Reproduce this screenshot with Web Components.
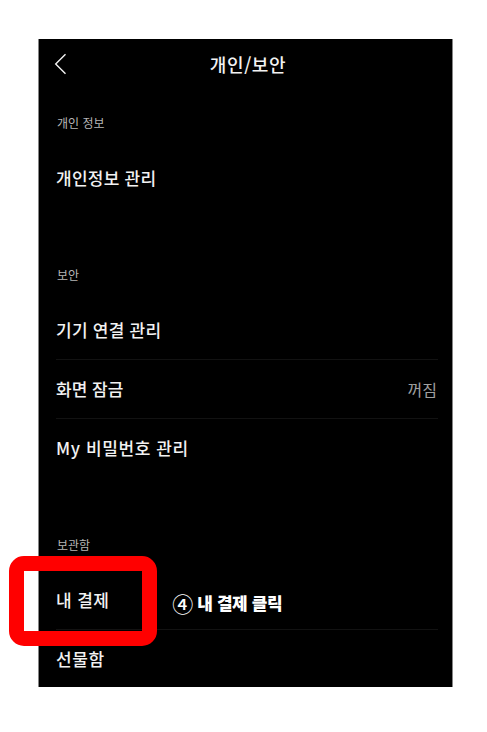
<!DOCTYPE html>
<html lang="ko">
<head>
<meta charset="UTF-8">
<title>개인/보안</title>
<style>
  body {
    margin: 0;
    background: #fff;
    font-family: "Noto Sans CJK KR", sans-serif;
  }
</style>
</head>
<body>
<guide-page>
  <phone-screen>
    <nav-header>개인/보안</nav-header>
    <setting-section label="개인 정보">
      <setting-row style="--track: 0.25px">개인정보 관리</setting-row>
    </setting-section>
    <setting-section label="보안">
      <setting-row line style="--track: 0.25px">기기 연결 관리</setting-row>
      <setting-row line value="꺼짐">화면 잠금</setting-row>
      <setting-row style="--track: 0.6px">My 비밀번호 관리</setting-row>
    </setting-section>
    <setting-section label="보관함">
      <setting-row line note="내 결제 클릭" step="④" style="--track: 0.4px">내 결제</setting-row>
      <setting-row style="--track: 0.6px">선물함</setting-row>
    </setting-section>
  </phone-screen>
  <highlight-box></highlight-box>
</guide-page>

<script>
class GuidePage extends HTMLElement {
  connectedCallback() {
    this.attachShadow({ mode: 'open' });
    this.shadowRoot.innerHTML = `
      <style>
        :host {
          display: block;
          position: relative;
          box-sizing: border-box;
          width: 487px;
          height: 732px;
          padding: 39px 34px 45px 38px;
          overflow: hidden;
        }
      </style>
      <slot></slot>
    `;
  }
}
customElements.define('guide-page', GuidePage);

class PhoneScreen extends HTMLElement {
  connectedCallback() {
    this.attachShadow({ mode: 'open' });
    this.shadowRoot.innerHTML = `
      <style>
        :host {
          display: flex;
          flex-direction: column;
          box-sizing: border-box;
          height: 648px;
          padding: 0 14px 0 17px;
          background: #000;
          border: solid #858585;
          border-width: 0 1px;
          overflow: hidden;
        }
      </style>
      <slot></slot>
    `;
  }
}
customElements.define('phone-screen', PhoneScreen);

class NavHeader extends HTMLElement {
  connectedCallback() {
    this.attachShadow({ mode: 'open' });
    this.shadowRoot.innerHTML = `
      <style>
        :host {
          display: grid;
          grid-template-columns: 40px 1fr 38px;
          align-items: center;
          flex: none;
          height: 49px;
          margin-bottom: 8px;
          color: #f2f2f2;
        }
        svg {
          display: block;
          margin-left: -2px;
        }
        h1 {
          margin: 0;
          font-size: 18px;
          line-height: 24px;
          font-weight: 500;
          letter-spacing: 0.6px;
          text-align: center;
        }
      </style>
      <svg width="14" height="22" viewBox="0 0 14 22" fill="none" stroke="currentColor" stroke-width="1.4">
        <path d="M11.5 1.3 1.7 11 11.5 20.7"/>
      </svg>
      <h1><slot></slot></h1>
    `;
  }
}
customElements.define('nav-header', NavHeader);

class SettingSection extends HTMLElement {
  connectedCallback() {
    this.attachShadow({ mode: 'open' });
    this.shadowRoot.innerHTML = `
      <style>
        :host {
          display: block;
          flex: none;
          margin-bottom: 40px;
        }
        h2 {
          display: flex;
          align-items: center;
          height: 53px;
          margin: 0;
          padding-left: 1px;
          box-sizing: border-box;
          color: #b5b5b5;
          font-size: 12px;
          font-weight: 400;
        }
      </style>
      <h2>${this.getAttribute('label')}</h2>
      <slot></slot>
    `;
  }
}
customElements.define('setting-section', SettingSection);

class SettingRow extends HTMLElement {
  connectedCallback() {
    const note = this.getAttribute('note');
    const value = this.getAttribute('value');
    this.attachShadow({ mode: 'open' });
    this.shadowRoot.innerHTML = `
      <style>
        :host {
          display: flex;
          align-items: center;
          box-sizing: border-box;
          height: 59px;
          border-bottom: 1px solid transparent;
          color: #f2f2f2;
          font-size: 17px;
          line-height: 24px;
          font-weight: 500;
          white-space: nowrap;
        }
        :host([line]) {
          border-color: #121212;
        }
        .name {
          letter-spacing: var(--track, 0);
        }
        .value {
          margin-left: auto;
          padding-right: 1px;
          color: #a0a0a0;
          font-size: 16px;
          font-weight: 400;
        }
        .note {
          display: flex;
          align-items: center;
          gap: 4px;
          margin-left: 63px;
          padding-top: 6px;
          color: #fff;
          font-size: 17px;
          font-weight: 900;
          letter-spacing: -0.4px;
        }
        .step {
          font-size: 21px;
          font-weight: 500;
          letter-spacing: 0;
        }
      </style>
      <span class="name"><slot></slot></span>
      ${note ? `<span class="note"><span class="step">${this.getAttribute('step')}</span><span>${note}</span></span>` : ''}
      ${value ? `<span class="value">${value}</span>` : ''}
    `;
  }
}
customElements.define('setting-row', SettingRow);

// red frame laid over the row to tap
class HighlightBox extends HTMLElement {
  connectedCallback() {
    this.attachShadow({ mode: 'open' });
    this.shadowRoot.innerHTML = `
      <style>
        :host {
          position: absolute;
          left: 9px;
          top: 556px;
          box-sizing: border-box;
          width: 148px;
          height: 90px;
          border: 15px solid #f00;
          border-radius: 15px;
        }
      </style>
    `;
  }
}
customElements.define('highlight-box', HighlightBox);
</script>
</body>
</html>
